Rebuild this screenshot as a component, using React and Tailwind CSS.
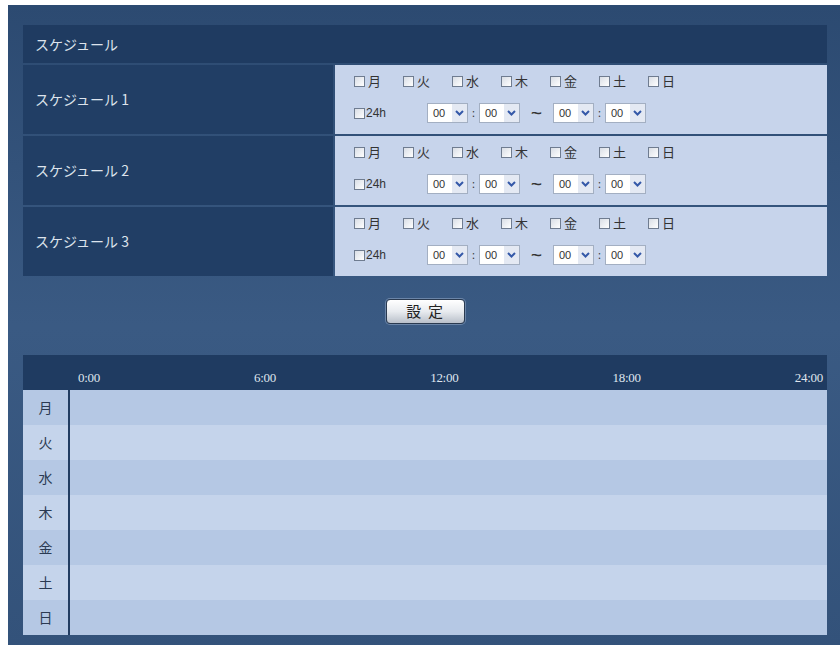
const DAYS = ["月", "火", "水", "木", "金", "土", "日"];
const HOURS = ["0:00", "6:00", "12:00", "18:00", "24:00"];
const jp = "font-['Noto_Sans_CJK_JP',sans-serif]";

function Box() {
  return (
    <span className="inline-block h-[11px] w-[11px] shrink-0 border border-[#6f7c90] bg-gradient-to-br from-[#d9dee6] to-white" />
  );
}

function TimeSelect() {
  return (
    <div className="flex h-[20px] w-[41px] items-stretch border border-[#a3afc2] bg-white">
      <span className="flex flex-1 items-center pl-[5px] font-['Liberation_Sans',sans-serif] text-[11px] text-[#333]">
        00
      </span>
      <span className="flex w-[15px] items-center justify-center bg-[#e4e9f3]">
        <svg width="9" height="6" viewBox="0 0 9 6">
          <path d="M1 1 L4.5 4.5 L8 1" fill="none" stroke="#3559a8" strokeWidth="2" />
        </svg>
      </span>
    </div>
  );
}

function ScheduleRow({ label }) {
  return (
    <div className="flex h-[69px] gap-[2px]">
      <div className={`flex w-[310px] items-center bg-[#213e65] pl-3 text-[14px] text-[#dde3ec] ${jp}`}>
        {label}
      </div>
      <div className="flex flex-1 flex-col bg-[#c7d4eb] pl-[19px] pt-[7px]">
        <div className={`flex h-[18px] items-center text-[13px] text-[#333] ${jp}`}>
          {DAYS.map((d) => (
            <label key={d} className="flex w-[49px] items-center gap-[3px]">
              <Box />
              <span>{d}</span>
            </label>
          ))}
        </div>
        <div className="mt-[13px] flex h-[20px] items-center text-[#333]">
          <label className="flex w-[73px] items-center gap-[1px] font-['Liberation_Sans',sans-serif] text-[12px]">
            <Box />
            <span>24h</span>
          </label>
          <TimeSelect />
          <span className="w-[11px] text-center text-[11px]">:</span>
          <TimeSelect />
          <span className="w-[33px] text-center text-[20px] leading-none">~</span>
          <TimeSelect />
          <span className="w-[11px] text-center text-[11px]">:</span>
          <TimeSelect />
        </div>
      </div>
    </div>
  );
}

export default function App() {
  return (
    <div className="min-h-screen bg-white pl-2 pt-[5px]">
      <div className="bg-gradient-to-b from-[#2c4a71] via-[#3a5a83] to-[#33527a] pb-[12px] pl-[15px] pr-[13px] pt-5">
        {/* schedule settings */}
        <div className="flex flex-col gap-[2px]">
          <div className={`flex h-[38px] items-center bg-[#1f3b61] pl-3 text-[14px] text-[#dde3ec] ${jp}`}>
            スケジュール
          </div>
          <ScheduleRow label="スケジュール 1" />
          <ScheduleRow label="スケジュール 2" />
          <ScheduleRow label="スケジュール 3" />
        </div>

        <div className="flex h-[79px] items-center justify-center pb-[8px]">
          <button
            className={`h-[25px] w-[79px] rounded-[4px] border border-[#2a3a50] bg-gradient-to-b from-white via-[#e8ebef] to-[#b9c0ca] pl-[6px] text-[15px] tracking-[0.45em] text-[#222] shadow-[0_0_0_1px_#6b85a8] ${jp}`}
          >
            設定
          </button>
        </div>

        {/* weekly timeline */}
        <div>
          <div className="flex h-[35px] bg-[#1f3b61]">
            <div className="w-[47px] shrink-0" />
            <div className="flex flex-1 items-end justify-between pb-[3px] pl-[8px] pr-[4px] font-['Liberation_Serif',serif] text-[13px] tracking-[-0.3px] text-[#dfe5ee]">
              {HOURS.map((h) => (
                <span key={h}>{h}</span>
              ))}
            </div>
          </div>
          {DAYS.map((d, i) => (
            <div
              key={d}
              className={`flex h-[35px] ${i % 2 === 0 ? "bg-[#b5c8e4]" : "bg-[#c5d4eb]"}`}
            >
              <div
                className={`flex w-[45px] shrink-0 items-center justify-center text-[14px] text-[#2b3a52] ${jp}`}
              >
                {d}
              </div>
              <div className="w-[2px] bg-[#213c61]" />
              <div className="flex-1" />
            </div>
          ))}
        </div>
      </div>
    </div>
  );
}
